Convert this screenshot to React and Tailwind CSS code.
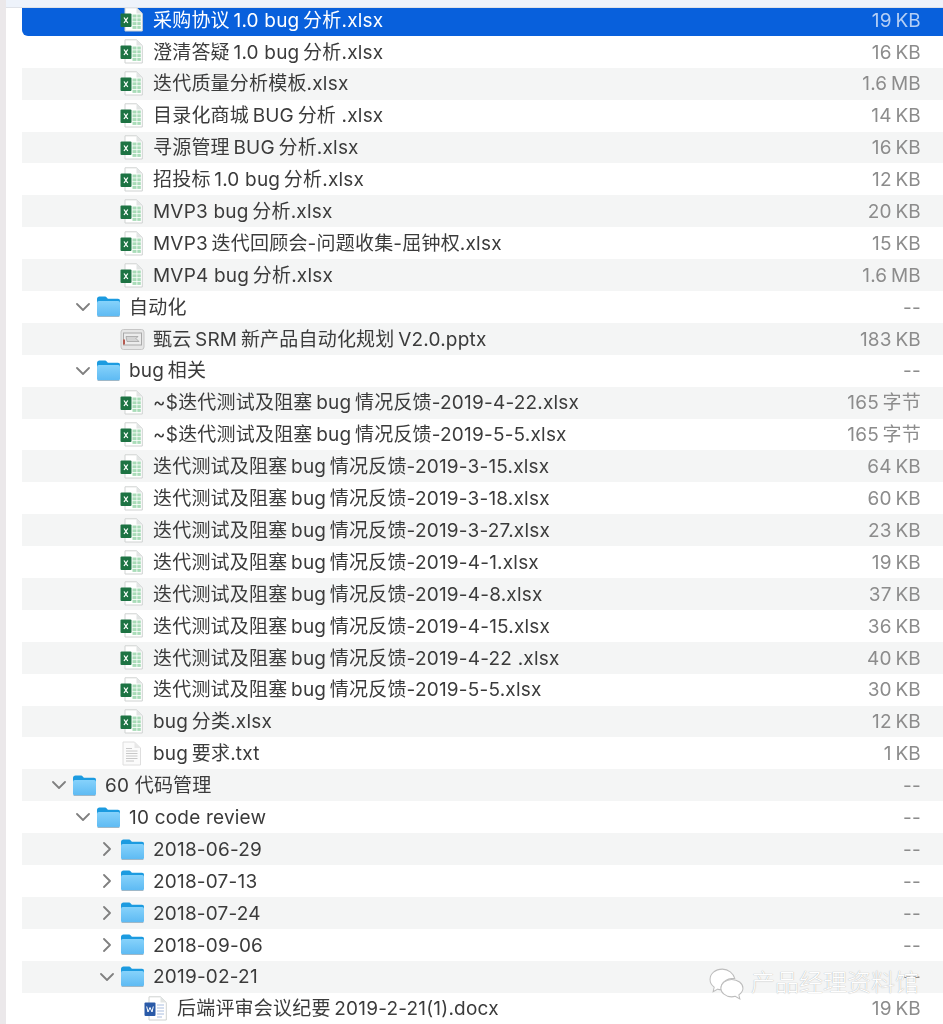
const rows = [
  { type: 'xlsx', level: 3, name: '采购协议 1.0 bug 分析.xlsx', size: '19 KB' },
  { type: 'xlsx', level: 3, name: '澄清答疑 1.0 bug 分析.xlsx', size: '16 KB' },
  { type: 'xlsx', level: 3, name: '迭代质量分析模板.xlsx', size: '1.6 MB' },
  { type: 'xlsx', level: 3, name: '目录化商城 BUG 分析 .xlsx', size: '14 KB' },
  { type: 'xlsx', level: 3, name: '寻源管理 BUG 分析.xlsx', size: '16 KB' },
  { type: 'xlsx', level: 3, name: '招投标 1.0 bug 分析.xlsx', size: '12 KB' },
  { type: 'xlsx', level: 3, name: 'MVP3 bug 分析.xlsx', size: '20 KB' },
  { type: 'xlsx', level: 3, name: 'MVP3 迭代回顾会-问题收集-屈钟权.xlsx', size: '15 KB' },
  { type: 'xlsx', level: 3, name: 'MVP4 bug 分析.xlsx', size: '1.6 MB' },
  { type: 'open', level: 2, name: '自动化', size: '--' },
  { type: 'pptx', level: 3, name: '甄云 SRM 新产品自动化规划 V2.0.pptx', size: '183 KB' },
  { type: 'open', level: 2, name: 'bug 相关', size: '--' },
  { type: 'xlsx', level: 3, name: '~$迭代测试及阻塞 bug 情况反馈-2019-4-22.xlsx', size: '165 字节' },
  { type: 'xlsx', level: 3, name: '~$迭代测试及阻塞 bug 情况反馈-2019-5-5.xlsx', size: '165 字节' },
  { type: 'xlsx', level: 3, name: '迭代测试及阻塞 bug 情况反馈-2019-3-15.xlsx', size: '64 KB' },
  { type: 'xlsx', level: 3, name: '迭代测试及阻塞 bug 情况反馈-2019-3-18.xlsx', size: '60 KB' },
  { type: 'xlsx', level: 3, name: '迭代测试及阻塞 bug 情况反馈-2019-3-27.xlsx', size: '23 KB' },
  { type: 'xlsx', level: 3, name: '迭代测试及阻塞 bug 情况反馈-2019-4-1.xlsx', size: '19 KB' },
  { type: 'xlsx', level: 3, name: '迭代测试及阻塞 bug 情况反馈-2019-4-8.xlsx', size: '37 KB' },
  { type: 'xlsx', level: 3, name: '迭代测试及阻塞 bug 情况反馈-2019-4-15.xlsx', size: '36 KB' },
  { type: 'xlsx', level: 3, name: '迭代测试及阻塞 bug 情况反馈-2019-4-22 .xlsx', size: '40 KB' },
  { type: 'xlsx', level: 3, name: '迭代测试及阻塞 bug 情况反馈-2019-5-5.xlsx', size: '30 KB' },
  { type: 'xlsx', level: 3, name: 'bug 分类.xlsx', size: '12 KB' },
  { type: 'txt', level: 3, name: 'bug 要求.txt', size: '1 KB' },
  { type: 'open', level: 1, name: '60\u00a0代码管理', size: '--' },
  { type: 'open', level: 2, name: '10 code review', size: '--' },
  { type: 'closed', level: 3, name: '2018-06-29', size: '--' },
  { type: 'closed', level: 3, name: '2018-07-13', size: '--' },
  { type: 'closed', level: 3, name: '2018-07-24', size: '--' },
  { type: 'closed', level: 3, name: '2018-09-06', size: '--' },
  { type: 'open', level: 3, name: '2019-02-21', size: '--' },
  { type: 'docx', level: 4, name: '后端评审会议纪要 2019-2-21(1).docx', size: '19 KB' },
];

// the gap between Chinese and latin is narrower than a normal space in the picture
const tighten = (s) =>
  s
    .replace(/([\u4e00-\u9fff]) (?=[A-Za-z0-9])/g, '$1\u2009')
    .replace(/([A-Za-z0-9]) (?=[\u4e00-\u9fff])/g, '$1\u2009');

function FolderIcon() {
  return (
    <svg width="25" height="23" viewBox="0 0 25 23" className="shrink-0">
      <defs>
        <linearGradient id="folderBody" x1="0" y1="0" x2="0" y2="1">
          <stop offset="0" stopColor="#86d2fb" />
          <stop offset="1" stopColor="#5dbaf3" />
        </linearGradient>
      </defs>
      <path d="M1 4C1 2.500 2 1.500 3.500 1.500h5.200c.9 0 1.400.3 2 1l1.200 1.300h10C23.400 3.800 24 4.700 24 6v2H1z" fill="#1c9be0" />
      <rect x="1" y="6" width="23" height="15.500" rx="1.800" fill="url(#folderBody)" />
      <rect x="1.500" y="21" width="22" height="1" rx=".5" fill="#9fb8c8" />
    </svg>
  );
}

function XlsxIcon() {
  return (
    <svg width="23" height="25" viewBox="0 0 23 25" className="shrink-0">
      <path d="M5 .8h11.500L22.300 6.500V24H5z" fill="#fff" stroke="#cfd2d1" strokeWidth="1" />
      <path d="M16.500 .8l5.800 5.700h-5.800z" fill="#e2e5e4" />
      <g fill="#a9dcb8">
        <rect x="12.500" y="7.500" width="4" height="3" />
        <rect x="17.300" y="7.500" width="3.500" height="3" />
        <rect x="12.500" y="11.300" width="4" height="3" />
        <rect x="17.300" y="11.300" width="3.500" height="3" />
        <rect x="12.500" y="15.100" width="4" height="3" />
        <rect x="17.300" y="15.100" width="3.500" height="3" />
        <rect x="12.500" y="18.900" width="4" height="3" />
        <rect x="17.300" y="18.900" width="3.500" height="3" />
      </g>
      <rect x=".5" y="6.500" width="11" height="13.500" rx="1" fill="#1d7343" />
      <path d="M4 10.500l3.800 5.500M7.800 10.500L4 16" stroke="#fff" strokeWidth="1.300" />
    </svg>
  );
}

function PptxIcon() {
  return (
    <svg width="25" height="25" viewBox="0 0 25 25" className="shrink-0">
      <rect x="1" y="3.500" width="23" height="20" rx="2.500" fill="#e6e6e6" stroke="#c6c6c6" />
      <rect x="3" y="6.500" width="19" height="13" fill="#a9a9a9" />
      <rect x="4" y="7.500" width="17" height="11" fill="#ececec" />
      <path d="M6 10.500h12l-2 2 3 3H7z" fill="#d4d4d4" stroke="#8e8e8e" strokeWidth=".6" />
      <rect x="3" y="13.500" width="2" height="5" fill="#b65a50" />
    </svg>
  );
}

function TxtIcon() {
  return (
    <svg width="23" height="25" viewBox="0 0 23 25" className="shrink-0">
      <path d="M3 1h11.500L20.500 7v17H3z" fill="#fbfbfb" stroke="#dedede" />
      <path d="M14.500 1l6 6h-6z" fill="#e8e8e8" />
      <path d="M6 7.500h6M6 10h11.500M6 12.500h11.500M6 15h11.500M6 17.500h11.500M6 20h8" stroke="#c8c8c8" strokeWidth="1" />
    </svg>
  );
}

function DocxIcon() {
  return (
    <svg width="23" height="25" viewBox="0 0 23 25" className="shrink-0">
      <path d="M5 .8h11.500L22.300 6.500V24H5z" fill="#fff" stroke="#cfd2d1" />
      <path d="M16.500 .8l5.800 5.700h-5.800z" fill="#e2e5e4" />
      <path d="M13 9h7M13 12h7M13 15h7M13 18h7M13 21h5" stroke="#a9bedf" strokeWidth="1.200" />
      <rect x=".5" y="6.500" width="11" height="13.500" rx="1" fill="#2a5aa8" />
      <path d="M2.700 10.500l1.300 5.500 2-4.500 2 4.500 1.300-5.500" stroke="#fff" strokeWidth="1" fill="none" />
    </svg>
  );
}

function Chevron({ open }) {
  return (
    <svg width="14" height="14" viewBox="0 0 14 14" className="shrink-0" fill="none" stroke="#808080" strokeWidth="1.800" strokeLinecap="round" strokeLinejoin="round">
      {open ? <path d="M1 4l6 6 6-6" /> : <path d="M4 1l6 6-6 6" />}
    </svg>
  );
}

function Row({ row, index }) {
  const selected = index === 0;
  const isFolder = row.type === 'open' || row.type === 'closed';
  const rowBg = selected ? 'bg-[#0860dc] rounded-bl-md' : index % 2 === 0 ? 'bg-[#f4f5f5]' : 'bg-white';
  const indent = { 1: 'pl-[30px]', 2: 'pl-[54px]', 3: isFolder ? 'pl-[78px]' : 'pl-[98px]', 4: 'pl-[122px]' }[row.level];

  return (
    <div className={`flex h-[31.9px] items-center pr-[22px] text-[19px] tracking-[0.2px] ${rowBg} ${indent}`}>
      {isFolder && (
        <span className="flex w-[20px] shrink-0">
          <Chevron open={row.type === 'open'} />
        </span>
      )}
      <span className="flex w-[33px] shrink-0">
        {isFolder && <FolderIcon />}
        {row.type === 'xlsx' && <XlsxIcon />}
        {row.type === 'pptx' && <PptxIcon />}
        {row.type === 'txt' && <TxtIcon />}
        {row.type === 'docx' && <DocxIcon />}
      </span>
      <span className={`flex-1 whitespace-nowrap pt-[2px] ${selected ? 'text-white' : 'text-[#3b3b3b]'}`}>{tighten(row.name)}</span>
      <span className={`whitespace-nowrap pt-[2px] ${selected ? 'text-[#b5cff5]' : 'text-[#8c8c8c]'}`}>{row.size.replace(' ', '\u2009')}</span>
    </div>
  );
}

function Watermark() {
  return (
    <div className="absolute left-[708px] top-[965px] flex items-center gap-[6px]">
      <svg width="37" height="33" viewBox="0 0 36 32" fill="#fff" stroke="#bdbdbd" strokeWidth="1">
        <path d="M14 2C7 2 2 6.500 2 12c0 3 1.500 5.500 4 7.500L5 24l4.500-2.500c1 .3 2 .5 3.500.5 C12 16 17 11 26 11 24.500 6 20 2 14 2z" />
        <path d="M23 12c-6 0-10.500 4-10.500 8.500S17 29 23 29c1.200 0 2.300-.2 3.500-.5L31 31l-1-4c2.500-1.700 4-4 4-6.500C34 16 29 12 23 12z" />
      </svg>
      <span className="whitespace-nowrap text-[24px] font-light text-white [text-shadow:0_0_1px_#999]">产品经理资料馆</span>
    </div>
  );
}

export default function App() {
  return (
    <div className="relative h-[1024px] w-[943px] overflow-hidden bg-white font-['Inter','Noto_Sans_CJK_SC',sans-serif]">
      <div className="flex h-full blur-[0.35px]">
        <div className="w-[6px] shrink-0 bg-[#ebe8ea]" />
        <div className="min-w-0 flex-1 pt-[4px] pl-[16px]">
          {rows.map((row, i) => (
            <Row key={i} row={row} index={i} />
          ))}
        </div>
      </div>
      {/* column header strip sits over the first row */}
      <div className="absolute left-[6px] right-0 top-0 h-[8px] border-b border-[#dfe2e8] bg-[#eef3fb]" />
      <Watermark />
    </div>
  );
}
